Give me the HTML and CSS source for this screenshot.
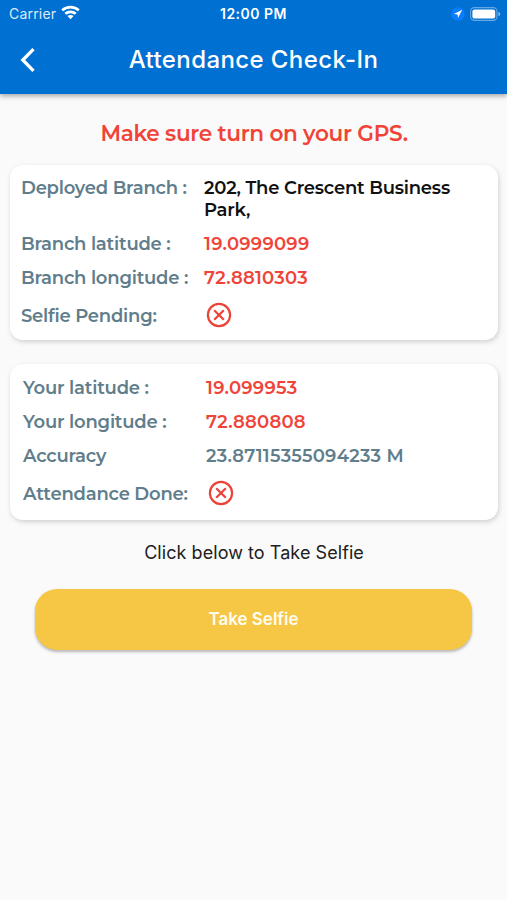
FILE: index.html
```html
<!DOCTYPE html>
<html lang="en">
<head>
<meta charset="utf-8">
<title>Attendance Check-In</title>
<link rel="stylesheet" href="styles.css">
</head>
<body>
<header class="header">
  <div class="status">
    <div class="status-left">
      <span class="carrier">Carrier</span>
      <svg class="wifi" width="19" height="15" viewBox="0 0 19 15"><g fill="none" stroke="#fff" stroke-width="2.7"><path d="M1.2 5.4C5.8.9 13.2.9 17.8 5.4"/><path d="M4.3 8.8C7.2 6.1 11.8 6.1 14.7 8.8"/></g><path d="M6.4 11.1Q9.5 8.8 12.6 11.1L9.5 14.2Z" fill="#fff"/></svg>
    </div>
    <span class="time">12:00 PM</span>
    <div class="status-right">
      <svg width="14" height="14" viewBox="0 0 14 14"><circle cx="7" cy="7" r="6.8" fill="#0a7cff"/><path d="M11.2 2.8 2.9 7.1 6.6 7.4 7 11.1Z" fill="#fff"/></svg>
      <svg width="31" height="14" viewBox="0 0 31 14"><rect x=".6" y=".6" width="26.4" height="12.8" rx="3.8" fill="none" stroke="#fff" stroke-opacity=".4" stroke-width="1.1"/><rect x="2.4" y="2.4" width="22.8" height="9.2" rx="2.2" fill="#fff"/><path d="M28.4 4.8Q30.4 5.5 30.4 7T28.4 9.2Z" fill="#fff" fill-opacity=".5"/></svg>
    </div>
  </div>
  <div class="nav">
    <svg class="back" width="16" height="24" viewBox="0 0 16 24"><path d="M13.5 1.2 2.8 12 13.5 22.8" fill="none" stroke="#fff" stroke-width="3.3"/></svg>
    <h1 class="title">Attendance Check-In</h1>
  </div>
</header>
<main class="main">
  <p class="notice">Make sure turn on your GPS.</p>
  <section class="card branch">
    <div class="row"><span class="label">Deployed Branch :</span><span class="value address">202, The Crescent Business<br>Park,</span></div>
    <div class="row"><span class="label">Branch latitude :</span><span class="value number red">19.0999099</span></div>
    <div class="row"><span class="label">Branch longitude :</span><span class="value number red">72.8810303</span></div>
    <div class="row icon-row"><span class="label">Selfie Pending:</span><svg class="cross" width="26" height="26" viewBox="0 0 26 26"><circle cx="13" cy="13" r="11.1"/><path d="m8.2 8.2 9.6 9.6m0-9.6-9.6 9.6"/></svg></div>
  </section>
  <section class="card yours">
    <div class="row"><span class="label">Your latitude :</span><span class="value number red">19.099953</span></div>
    <div class="row"><span class="label">Your longitude :</span><span class="value number red">72.880808</span></div>
    <div class="row"><span class="label">Accuracy</span><span class="value number">23.87115355094233 M</span></div>
    <div class="row icon-row"><span class="label">Attendance Done:</span><svg class="cross" width="26" height="26" viewBox="0 0 26 26"><circle cx="13" cy="13" r="11.1"/><path d="m8.2 8.2 9.6 9.6m0-9.6-9.6 9.6"/></svg></div>
  </section>
  <p class="hint">Click below to Take Selfie</p>
  <button class="button" type="button">Take Selfie</button>
</main>
</body>
</html>
```
FILE: styles.css
```css
* { box-sizing: border-box; }
body { margin: 0; min-height: 900px; background: #fafafa; font-family: Inter, "Liberation Sans", sans-serif; }
.header { height: 94px; background: #0070d3; color: #fff; box-shadow: 0 2px 5px rgba(0,0,0,.34); }
.status { height: 27px; display: grid; grid-template-columns: 1fr auto 1fr; align-items: center; padding: 0 6px; }
.status-left, .status-right { display: flex; align-items: center; }
.status-left { gap: 5px; padding-left: 3px; }
.status-right { justify-content: flex-end; gap: 5px; }
.carrier { font-size: 14px; letter-spacing: .2px; color: #dcebf9; }
.time { font-size: 14px; font-weight: 600; letter-spacing: .5px; }
.wifi { margin-top: -2px; }
.nav { height: 67px; display: grid; grid-template-columns: 60px 1fr 60px; align-items: center; }
.back { margin: 0 0 1px 20px; }
.title { margin: -1px 0 0; font-size: 24px; line-height: 30px; font-weight: 500; letter-spacing: .4px; text-align: center; white-space: nowrap; }
.main { padding: 25px 9px 0 10px; }
.notice { margin: 0; height: 46px; line-height: 29px; text-align: center; color: #f04438; font-family: Montserrat, Inter, sans-serif; font-size: 21.6px; font-weight: 600; letter-spacing: -.33px; white-space: nowrap; }
.card { background: #fff; border-radius: 13px; box-shadow: 1px 2px 5px rgba(0,0,0,.17); font-family: Montserrat, Inter, sans-serif; font-size: 18px; font-weight: 600; letter-spacing: -.22px; line-height: 22px; color: #607d8b; white-space: nowrap; }
.branch { height: 175px; padding: 12px 0 0 11px; }
.yours { height: 156px; margin-top: 24px; padding: 13px 0 0 13px; }
.row { display: grid; grid-template-columns: 183px 1fr; padding-bottom: 12px; }
.icon-row { height: 30px; padding: 0; align-items: center; }
.cross { margin: -2px 0 0 1.5px; fill: none; stroke: #ec4338; stroke-width: 2.2; }
.number { letter-spacing: .27px; }
.red { color: #f04438; }
.address { color: #111; }
.hint { margin: 20px 0 0; line-height: 26px; text-align: center; font-size: 18px; letter-spacing: .06px; color: #202020; }
.button { display: block; width: 437px; height: 61px; margin: 23px 0 0 25px; border: 0; border-radius: 22px; background: #f6c745; box-shadow: 0 2px 3px rgba(0,0,0,.27); color: #fffdf0; font: 600 17px/22px Inter, sans-serif; padding: 0 0 2px; }
```
